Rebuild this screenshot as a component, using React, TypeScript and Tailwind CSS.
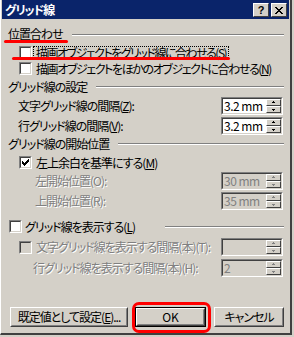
import React from "react";

const FONT = "font-['Noto_Sans_CJK_JP',sans-serif] [font-feature-settings:'palt'] tracking-[-1px] whitespace-nowrap";

function Sep() {
  return <div className="flex-1 h-[2px] border-t border-t-[#808080] border-b border-b-white" />;
}

function Check({ checked = false, disabled = false }: { checked?: boolean; disabled?: boolean }) {
  return (
    <span className="relative block w-[13px] h-[13px] shrink-0 border border-t-[#808080] border-l-[#808080] border-b-white border-r-white">
      <span
        className={`absolute inset-0 border border-t-[#404040] border-l-[#404040] border-b-[#d4d0c8] border-r-[#d4d0c8] ${
          disabled ? "bg-[#d4d0c8]" : "bg-white"
        }`}
      >
        {checked && (
          <svg width="9" height="9" viewBox="0 0 9 9" className="block" shapeRendering="crispEdges">
            <rect x="1" y="3" width="1" height="3" fill="#000" />
            <rect x="2" y="4" width="1" height="3" fill="#000" />
            <rect x="3" y="5" width="1" height="3" fill="#000" />
            <rect x="4" y="4" width="1" height="3" fill="#000" />
            <rect x="5" y="3" width="1" height="3" fill="#000" />
            <rect x="6" y="2" width="1" height="3" fill="#000" />
            <rect x="7" y="1" width="1" height="3" fill="#000" />
          </svg>
        )}
      </span>
    </span>
  );
}

function SpinHalf({ up, disabled }: { up: boolean; disabled?: boolean }) {
  const c = disabled ? "#808080" : "#000";
  return (
    <div className="flex-1 flex items-center justify-center bg-[#d4d0c8] border border-t-white border-l-white border-b-[#404040] border-r-[#404040]">
      <svg width="5" height="3" viewBox="0 0 5 3" shapeRendering="crispEdges" className="block">
        {up ? (
          <>
            <rect x="2" y="0" width="1" height="1" fill={c} />
            <rect x="1" y="1" width="3" height="1" fill={c} />
          </>
        ) : (
          <>
            <rect x="1" y="1" width="3" height="1" fill={c} />
            <rect x="2" y="2" width="1" height="1" fill={c} />
          </>
        )}
      </svg>
    </div>
  );
}

function Spin({ value, disabled = false }: { value: string; disabled?: boolean }) {
  return (
    <div className="w-[62px] h-[18px] shrink-0 border border-t-[#808080] border-l-[#808080] border-b-white border-r-white">
      <div
        className={`h-full flex border border-t-[#404040] border-l-[#404040] border-b-[#d4d0c8] border-r-[#d4d0c8] ${
          disabled ? "bg-[#d4d0c8]" : "bg-white"
        }`}
      >
        <div
          className={`flex-1 pl-[1px] text-[12px] leading-[14px] tracking-[-0.5px] ${
            disabled ? "text-[#808080]" : "text-black"
          }`}
        >
          {value}
        </div>
        <div className="w-[15px] flex flex-col">
          <SpinHalf up disabled={disabled} />
          <SpinHalf up={false} disabled={disabled} />
        </div>
      </div>
    </div>
  );
}

function Btn({ children, w, def = false }: { children: React.ReactNode; w: string; def?: boolean }) {
  return (
    <div className={`${w} h-[20px] ${def ? "border border-black" : ""}`}>
      <div className="h-full border border-t-white border-l-white border-b-[#404040] border-r-[#404040]">
        <div className="h-full flex items-center justify-center border border-t-[#d4d0c8] border-l-[#d4d0c8] border-b-[#808080] border-r-[#808080] text-[12px] text-black leading-none">
          {children}
        </div>
      </div>
    </div>
  );
}

const dis = "text-[#808080] [text-shadow:1px_1px_0_#fff]";

export default function App() {
  return (
    <div className={`relative w-[294px] h-[337px] bg-[#d4d0c8] overflow-hidden ${FONT} text-[12px] text-black`}>
      <div className="w-[292px] h-[335px] flex flex-col border-l border-l-white border-r-2 border-r-[#404040] border-b-2 border-b-[#404040]">
        {/* title bar */}
        <div className="h-[19px] ml-[1px] mr-[1px] bg-[#0a246a] flex items-center pl-[3px] pr-[2px]">
          <span className="text-white font-bold text-[12px] leading-none">グリッド線</span>
          <div className="ml-auto flex gap-[2px] mt-[1px]">
            <div className="w-[16px] h-[14px] bg-[#d4d0c8] border border-t-white border-l-white border-b-[#404040] border-r-[#404040] flex items-center justify-center">
              <span className="font-['Liberation_Sans',sans-serif] font-bold text-[11px] leading-none text-black tracking-[0px]">?</span>
            </div>
            <div className="w-[16px] h-[14px] bg-[#d4d0c8] border border-t-white border-l-white border-b-[#404040] border-r-[#404040] flex items-center justify-center">
              <svg width="8" height="7" viewBox="0 0 8 7" shapeRendering="crispEdges" className="block">
                <path d="M0 0h2v1H0zM6 0h2v1H6zM1 1h2v1H1zM5 1h2v1H5zM2 2h4v1H2zM3 3h2v1H3zM2 4h4v1H2zM1 5h2v1H1zM5 5h2v1H5zM0 6h2v1H0zM6 6h2v1H6z" fill="#000" />
              </svg>
            </div>
          </div>
        </div>

        {/* header 1 */}
        <div className="mt-[7px] h-[16px] flex items-center pl-[7px] pr-[6px]">
          <span className="leading-none">位置合わせ</span>
          <div className="ml-[9px] flex-1 flex mt-[2px]">
            <Sep />
          </div>
        </div>

        {/* cb1 */}
        <div className="mt-[4px] h-[13px] flex items-center pl-[18px]">
          <Check />
          <span className="ml-[1px] px-[2px] h-[14px] flex items-center border border-dotted border-black leading-none tracking-[-1.5px]">
            描画オブジェクトをグリッド線に合わせる(<u>S</u>)
          </span>
        </div>

        {/* cb2 */}
        <div className="mt-[3px] h-[13px] flex items-center pl-[18px]">
          <Check />
          <span className="ml-[4px] leading-none tracking-[-1.4px]">描画オブジェクトをほかのオブジェクトに合わせる(<u>N</u>)</span>
        </div>

        {/* header 2 */}
        <div className="mt-[4px] h-[16px] flex items-center pl-[7px] pr-[6px]">
          <span className="leading-none">グリッド線の設定</span>
          <div className="ml-[9px] flex-1 flex">
            <Sep />
          </div>
        </div>

        <div className="mt-[2px] h-[18px] flex items-center pl-[17px] pr-[7px] justify-between">
          <span className="leading-none">文字グリッド線の間隔(<u>Z</u>):</span>
          <Spin value="3.2 mm" />
        </div>
        <div className="mt-[2px] h-[18px] flex items-center pl-[17px] pr-[7px] justify-between">
          <span className="leading-none">行グリッド線の間隔(<u>V</u>):</span>
          <Spin value="3.2 mm" />
        </div>

        {/* header 3 */}
        <div className="mt-[1px] h-[16px] flex items-center pl-[7px] pr-[6px]">
          <span className="leading-none">グリッド線の開始位置</span>
          <div className="ml-[9px] flex-1 flex">
            <Sep />
          </div>
        </div>

        <div className="mt-[4px] h-[13px] flex items-center pl-[18px]">
          <Check checked />
          <span className="ml-[4px] leading-none">左上余白を基準にする(<u>M</u>)</span>
        </div>

        <div className="mt-[3px] h-[18px] flex items-center pl-[34px] pr-[7px] justify-between">
          <span className={`leading-none ${dis}`}>左開始位置(O):</span>
          <Spin value="30 mm" disabled />
        </div>
        <div className="mt-[2px] h-[18px] flex items-center pl-[34px] pr-[7px] justify-between">
          <span className={`leading-none ${dis}`}>上開始位置(R):</span>
          <Spin value="35 mm" disabled />
        </div>

        <div className="mt-[10px] h-[13px] flex items-center pl-[8px] pr-[6px]">
          <Check />
          <span className="ml-[3px] leading-none">グリッド線を表示する(<u>L</u>)</span>
          <div className="ml-[30px] flex-1 flex">
            <Sep />
          </div>
        </div>

        <div className="mt-[5px] h-[18px] flex items-center pl-[18px] pr-[7px]">
          <Check disabled />
          <span className={`ml-[4px] leading-none ${dis}`}>文字グリッド線を表示する間隔(本)(T):</span>
          <div className="ml-auto">
            <Spin value="" disabled />
          </div>
        </div>
        <div className="mt-[3px] h-[18px] flex items-center pl-[32px] pr-[7px] justify-between">
          <span className={`leading-none ${dis}`}>行グリッド線を表示する間隔(本)(H):</span>
          <Spin value="2" disabled />
        </div>

        {/* buttons */}
        <div className="mt-[30px] flex items-center pl-[9px]">
          <Btn w="w-[118px]">既定値として設定(<u>E</u>)...</Btn>
          <div className="ml-[7px]">
            <Btn w="w-[71px]" def>
              <span className="tracking-[0px]">OK</span>
            </Btn>
          </div>
          <div className="ml-[8px]">
            <Btn w="w-[70px]">キャンセル</Btn>
          </div>
        </div>
      </div>

      {/* red annotations */}
      <div className="absolute left-[4px] top-[40px] w-[64px] h-[3px] rounded-full bg-[#ff0000]" />
      <div className="absolute left-[12px] top-[57px] w-[218px] h-[3px] rounded-full bg-[#ff0000]" />
      <div className="absolute left-[132px] top-[302px] w-[79px] h-[31px] rounded-[7px] border-[3px] border-[#ff0000]" />
    </div>
  );
}
